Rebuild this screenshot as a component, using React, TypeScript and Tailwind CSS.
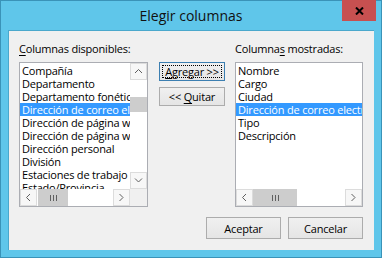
import type { ReactNode } from 'react'

const LEFT_ITEMS = [
  'Compañía',
  'Departamento',
  'Departamento fonético',
  'Dirección de correo electrónico',
  'Dirección de página web',
  'Dirección de página web personal',
  'Dirección personal',
  'División',
  'Estaciones de trabajo',
  'Estado/Provincia',
]

const RIGHT_ITEMS = ['Nombre', 'Cargo', 'Ciudad', 'Dirección de correo electrónico', 'Tipo', 'Descripción']

function Chevron({ dir }: { dir: 'up' | 'down' | 'left' | 'right' }) {
  const d = {
    up: 'M1 5 L4.5 1.5 L8 5',
    down: 'M1 1.5 L4.5 5 L8 1.5',
    left: 'M5 1 L1.5 4.5 L5 8',
    right: 'M1.5 1 L5 4.5 L1.5 8',
  }[dir]
  const vertical = dir === 'up' || dir === 'down'
  return (
    <svg width={vertical ? 9 : 7} height={vertical ? 7 : 9} viewBox={vertical ? '0 0 9 7' : '0 0 7 9'}>
      <path d={d} fill="none" stroke="#606060" strokeWidth="1" />
    </svg>
  )
}

function ArrowBox({ dir }: { dir: 'up' | 'down' | 'left' | 'right' }) {
  return (
    <div className="flex h-[17px] w-[17px] shrink-0 items-center justify-center border border-[#dcdcdc] bg-[#f7f7f7]">
      <Chevron dir={dir} />
    </div>
  )
}

function Grip() {
  return (
    <div className="flex gap-[2px]">
      <span className="h-[6px] w-px bg-[#606060]" />
      <span className="h-[6px] w-px bg-[#606060]" />
      <span className="h-[6px] w-px bg-[#606060]" />
    </div>
  )
}

function HScroll({ thumb }: { thumb: string }) {
  return (
    <div className="flex h-[17px] w-full bg-white">
      <ArrowBox dir="left" />
      <div className="flex flex-1">
        <div className={`flex ${thumb} items-center justify-center bg-[#cdcdcd]`}>
          <Grip />
        </div>
      </div>
      <ArrowBox dir="right" />
    </div>
  )
}

function Rows({ items, selected }: { items: string[]; selected: number }) {
  return (
    <div className="flex flex-col pt-[1px]">
      {items.map((t, i) => (
        <div
          key={t}
          className={`h-[13px] whitespace-nowrap pl-[2px] leading-[13px] ${
            i === selected ? 'bg-[#3399ff] text-white' : 'text-black'
          }`}
        >
          {t}
        </div>
      ))}
    </div>
  )
}

function Button({ children, focused, className }: { children: ReactNode; focused?: boolean; className: string }) {
  return (
    <div
      className={`flex items-center justify-center bg-gradient-to-b from-[#f0f0f0] to-[#e5e5e5] ${
        focused ? 'border border-[#3c7fb1] p-[2px]' : 'border border-[#acacac]'
      } ${className}`}
    >
      {focused ? (
        <span className="flex h-full w-full items-center justify-center border border-dotted border-black leading-[13px]">
          {children}
        </span>
      ) : (
        <span className="leading-[13px]">{children}</span>
      )}
    </div>
  )
}

export default function App() {
  return (
    <div className="h-[258px] w-[382px] overflow-hidden font-['Open_Sans',sans-serif] text-[11px] tracking-[-0.2px] text-black">
      <div className="flex h-full w-full flex-col border border-[#3a93b8] bg-[#5fc6ea]">
        {/* title bar */}
        <div className="relative flex h-[29px] shrink-0 items-center justify-center">
          <span className="text-[14px] tracking-normal text-[#111]">Elegir columnas</span>
          <div className="absolute right-[5px] top-[-1px] flex h-[21px] w-[34px] items-center justify-center bg-[#c75050]">
            <svg width="9" height="8" viewBox="0 0 9 8">
              <path d="M1 0.5 L8 7.5 M8 0.5 L1 7.5" stroke="#000" strokeWidth="2" />
            </svg>
          </div>
        </div>

        {/* client */}
        <div className="mx-[7px] flex h-[220px] flex-col border-l border-t border-[#4aa8cc] bg-[#f0f0f0] pl-[10px] pr-[10px] pt-[10px]">
          <div className="flex">
            {/* left column */}
            <div className="flex w-[129px] flex-col">
              <div className="h-[21px] leading-[15px]">
                <span className="underline underline-offset-2">C</span>olumnas disponibles:
              </div>
              <div className="flex h-[145px] flex-col border border-[#abadb3] bg-white">
                <div className="flex min-h-0 flex-1">
                  <div className="min-w-0 flex-1 overflow-hidden">
                    <Rows items={LEFT_ITEMS} selected={3} />
                  </div>
                  <div className="flex w-[17px] flex-col bg-white">
                    <ArrowBox dir="up" />
                    <div className="flex flex-1 flex-col">
                      <div className="mt-[17px] h-[15px] bg-[#cdcdcd]" />
                    </div>
                    <ArrowBox dir="down" />
                  </div>
                </div>
                <div className="flex">
                  <div className="min-w-0 flex-1">
                    <HScroll thumb="ml-px w-[30px]" />
                  </div>
                  <div className="h-[17px] w-[17px] bg-[#f0f0f0]" />
                </div>
              </div>
            </div>

            {/* middle buttons */}
            <div className="ml-[11px] flex w-[66px] flex-col gap-[6px] pt-[21px]">
              <Button focused className="h-[19px]">
                <span className="underline underline-offset-2">A</span>gregar &gt;&gt;
              </Button>
              <Button className="h-[19px]">
                &lt;&lt; <span className="underline underline-offset-2">Q</span>uitar
              </Button>
            </div>

            {/* right column */}
            <div className="ml-[10px] flex w-[128px] flex-col">
              <div className="h-[21px] leading-[15px]">
                Columna<span className="underline underline-offset-2">s</span> mostradas:
              </div>
              <div className="flex h-[145px] flex-col border border-[#abadb3] bg-white">
                <div className="min-h-0 flex-1 overflow-hidden">
                  <Rows items={RIGHT_ITEMS} selected={3} />
                </div>
                <HScroll thumb="w-[44px]" />
              </div>
            </div>
          </div>

          {/* bottom buttons */}
          <div className="mt-[10px] flex justify-end gap-[7px] pr-[1px]">
            <Button className="h-[22px] w-[75px]">Aceptar</Button>
            <Button className="h-[22px] w-[75px]">Cancelar</Button>
          </div>
        </div>
      </div>
    </div>
  )
}
